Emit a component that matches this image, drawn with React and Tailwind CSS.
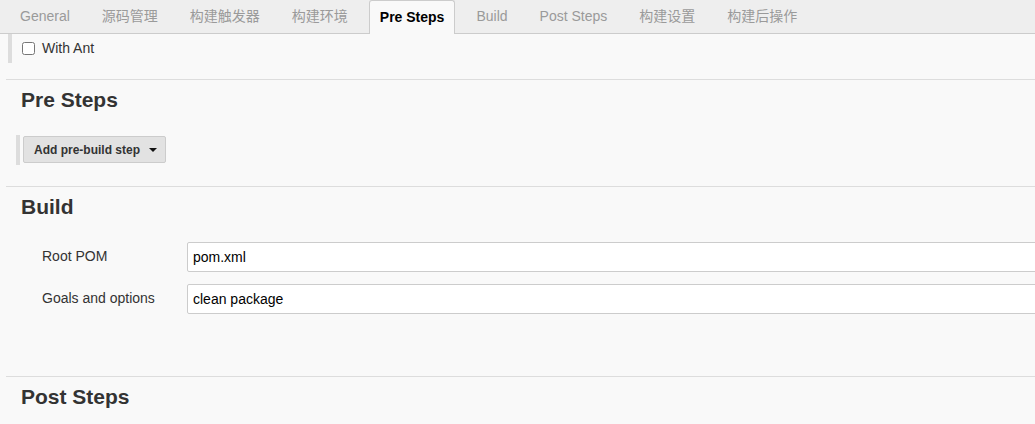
import { useState } from "react";

const tabs = [
  "General",
  "源码管理",
  "构建触发器",
  "构建环境",
  "Pre Steps",
  "Build",
  "Post Steps",
  "构建设置",
  "构建后操作",
];

function Section({ title }) {
  return (
    <div>
      <div className="ml-[6px] border-t border-[#dddddd]" />
      <h2 className="pl-[21px] pt-[8px] text-[21px] leading-[24px] font-bold text-[#333333]">{title}</h2>
    </div>
  );
}

function Field({ label, value }) {
  return (
    <div className="flex items-center">
      <label className="w-[145px] pl-[42px] box-content shrink-0 text-[14px] text-[#333333] -mt-[2px]">{label}</label>
      <input
        defaultValue={value}
        className="flex-1 -mr-[20px] h-[30px] px-[5px] bg-white border border-[#cccccc] rounded-[2px] text-[14px] text-black outline-none"
      />
    </div>
  );
}

export default function App() {
  const [active] = useState("Pre Steps");
  const [withAnt, setWithAnt] = useState(false);

  return (
    <div className="w-[1035px] h-[424px] overflow-hidden bg-[#f9f9f9] font-['Liberation_Sans','Noto_Sans_CJK_SC',sans-serif]">
      <div className="h-[34px] bg-[#eeeeee] border-b border-[#cccccc] flex items-end pl-[4px]">
        {tabs.map((tab) => {
          return tab === active ? (
            <div
              key={tab}
              className="mx-[5px] px-[10px] h-[34px] -mb-px flex items-center bg-[#f9f9f9] border border-b-0 border-[#cccccc] rounded-t-[3px] text-[14px] font-bold text-black"
            >
              {tab}
            </div>
          ) : (
            <div key={tab} className="mx-[5px] px-[11px] h-[33px] flex items-center text-[14px] text-[#9a9a9a]">
              {tab}
            </div>
          );
        })}
      </div>

      <div className="ml-[8px] border-l-4 border-[#dddddd] h-[29px] pl-[10px] pt-[7px] flex items-start">
        <label className="flex items-center gap-[7px] text-[14px] text-[#333333] leading-[14px]">
          <input
            type="checkbox"
            checked={withAnt}
            onChange={(e) => setWithAnt(e.target.checked)}
            className="m-0 w-[13px] h-[13px]"
          />
          With Ant
        </label>
      </div>

      <div className="h-[16px]" />
      <Section title="Pre Steps" />

      <div className="mt-[23px] ml-[16px] border-l-4 border-[#dddddd] pl-[3px] py-[1px] h-[30px] w-max">
        <button className="h-[27px] flex items-center pl-[10px] pr-[8px] bg-[#e2e2e2] border border-[#cccccc] rounded-[2px] text-[12px] font-bold text-[#333333]">
          Add pre-build step
          <svg width="8" height="4" viewBox="0 0 8 4" className="ml-[9px]">
            <path d="M0 0 L8 0 L4 4 Z" fill="#111111" />
          </svg>
        </button>
      </div>

      <div className="h-[21px]" />
      <Section title="Build" />

      <div className="mt-[23px] flex flex-col gap-[12px]">
        <Field label="Root POM" value="pom.xml" />
        <Field label="Goals and options" value="clean package" />
      </div>

      <div className="h-[62px]" />
      <Section title="Post Steps" />
    </div>
  );
}
